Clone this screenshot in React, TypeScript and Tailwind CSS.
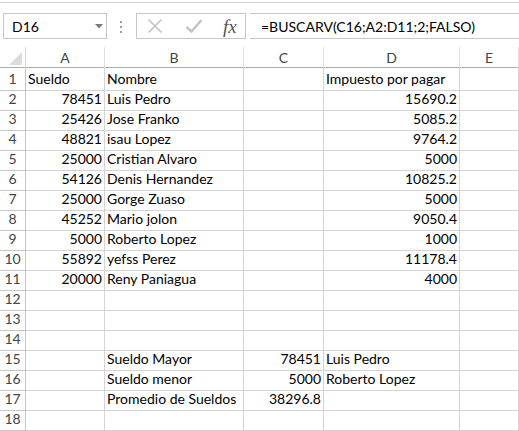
import React from 'react';

// Excel-like sheet: formula bar + grid
const font = { fontFamily: 'Lato, "Open Sans", sans-serif' };

type Cell = { v: string; right?: boolean };

const rows: Cell[][] = [
  [{ v: 'Sueldo' }, { v: 'Nombre' }, { v: '' }, { v: 'Impuesto por pagar' }, { v: '' }],
  [{ v: '78451', right: true }, { v: 'Luis Pedro' }, { v: '' }, { v: '15690.2', right: true }, { v: '' }],
  [{ v: '25426', right: true }, { v: 'Jose Franko' }, { v: '' }, { v: '5085.2', right: true }, { v: '' }],
  [{ v: '48821', right: true }, { v: 'isau Lopez' }, { v: '' }, { v: '9764.2', right: true }, { v: '' }],
  [{ v: '25000', right: true }, { v: 'Cristian Alvaro' }, { v: '' }, { v: '5000', right: true }, { v: '' }],
  [{ v: '54126', right: true }, { v: 'Denis Hernandez' }, { v: '' }, { v: '10825.2', right: true }, { v: '' }],
  [{ v: '25000', right: true }, { v: 'Gorge Zuaso' }, { v: '' }, { v: '5000', right: true }, { v: '' }],
  [{ v: '45252', right: true }, { v: 'Mario jolon' }, { v: '' }, { v: '9050.4', right: true }, { v: '' }],
  [{ v: '5000', right: true }, { v: 'Roberto Lopez' }, { v: '' }, { v: '1000', right: true }, { v: '' }],
  [{ v: '55892', right: true }, { v: 'yefss Perez' }, { v: '' }, { v: '11178.4', right: true }, { v: '' }],
  [{ v: '20000', right: true }, { v: 'Reny Paniagua' }, { v: '' }, { v: '4000', right: true }, { v: '' }],
  [{ v: '' }, { v: '' }, { v: '' }, { v: '' }, { v: '' }],
  [{ v: '' }, { v: '' }, { v: '' }, { v: '' }, { v: '' }],
  [{ v: '' }, { v: '' }, { v: '' }, { v: '' }, { v: '' }],
  [{ v: '' }, { v: 'Sueldo Mayor' }, { v: '78451', right: true }, { v: 'Luis Pedro' }, { v: '' }],
  [{ v: '' }, { v: 'Sueldo menor' }, { v: '5000', right: true }, { v: 'Roberto Lopez' }, { v: '' }],
  [{ v: '' }, { v: 'Promedio de Sueldos' }, { v: '38296.8', right: true }, { v: '' }, { v: '' }],
  [{ v: '' }, { v: '' }, { v: '' }, { v: '' }, { v: '' }],
  [{ v: '' }, { v: '' }, { v: '' }, { v: '' }, { v: '' }],
];

const cols = 'grid grid-cols-[26px_79px_139px_80px_136px_1fr]';

function FormulaBar() {
  return (
    <div className="h-[45px] border-t border-[#d5d5d5] mt-[2px] relative">
      <div className="absolute left-[3px] top-[10px] w-[104px] h-[26px] border border-[#c6c6c6] flex items-center pl-[8px] text-[14px] text-black">
        D16
        <svg className="absolute left-[91px] top-[10px]" width="8" height="5" viewBox="0 0 8 5">
          <path d="M0 0h8L4 4.5z" fill="#7a7a7a" />
        </svg>
      </div>
      <div className="absolute left-[120px] top-[18px] flex flex-col gap-[3px]">
        <div className="w-[2px] h-[2px] bg-[#a0a0a0]" />
        <div className="w-[2px] h-[2px] bg-[#a0a0a0]" />
        <div className="w-[2px] h-[2px] bg-[#a0a0a0]" />
      </div>
      <div className="absolute left-[136px] top-[10px] w-[110px] h-[26px] border border-[#c6c6c6] flex items-center">
        <svg className="ml-[10px]" width="16" height="16" viewBox="0 0 16 16">
          <path d="M1.5 1.5l13 13M14.5 1.5l-13 13" stroke="#c4c4c4" strokeWidth="1.6" />
        </svg>
        <svg className="ml-[22px]" width="18" height="16" viewBox="0 0 18 16">
          <path d="M1.5 9l5 4.5L16.5 2" stroke="#c4c4c4" strokeWidth="2.6" fill="none" />
        </svg>
        <span
          className="ml-[20px] text-[19px] italic text-[#555] leading-none"
          style={{ fontFamily: '"Liberation Serif", serif' }}
        >
          fx
        </span>
      </div>
      <div className="absolute left-[250px] right-0 top-[10px] h-[26px] border-y border-[#c6c6c6] flex items-center pl-[11px] text-[14px] text-black">
        =BUSCARV(C16;A2:D11;2;FALSO)
      </div>
    </div>
  );
}

export default function App() {
  return (
    <div className="w-[519px] h-[431px] overflow-hidden bg-white" style={font}>
      <FormulaBar />
      <div className={`${cols} h-[21px] border-b border-[#ababab] text-[14px] text-[#444]`}>
        <div className="border-r border-[#d5d5d5] relative">
          <svg className="absolute left-[9px] top-[5px]" width="13" height="13" viewBox="0 0 13 13">
            <path d="M13 0v13H0z" fill="#dcdcdc" />
          </svg>
        </div>
        {['A', 'B', 'C', 'D', 'E'].map((c) => (
          <div key={c} className="border-r border-[#e1e1e1] flex items-center justify-center">
            {c}
          </div>
        ))}
      </div>
      {rows.map((r, i) => (
        <div key={i} className={`${cols} h-[20px] text-[14px] text-black`}>
          <div className="border-r border-b border-[#c6c6c6] flex items-end justify-center pb-[1px] text-[#444]">
            {i < 18 ? i + 1 : ''}
          </div>
          {r.map((c, j) => (
            <div
              key={j}
              className={`border-r border-b border-[#d4d4d4] flex items-end pb-[1px] px-[2px] whitespace-nowrap overflow-visible ${
                c.right ? 'justify-end' : 'justify-start'
              }`}
            >
              {c.v}
            </div>
          ))}
        </div>
      ))}
    </div>
  );
}
